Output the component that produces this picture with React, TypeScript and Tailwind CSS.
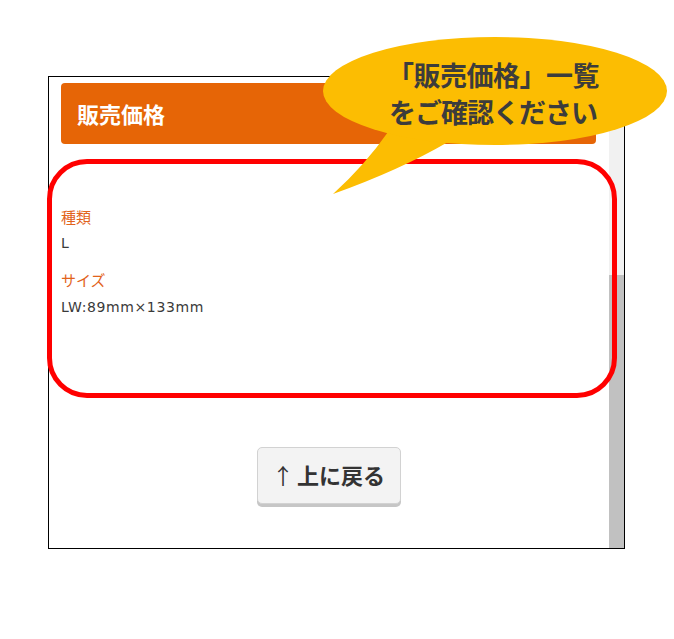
import React from 'react';

const jp = { fontFamily: '"Noto Sans CJK JP", "Noto Sans", sans-serif' };
const mixed = { fontFamily: '"DejaVu Sans", "Noto Sans CJK JP", sans-serif' };

const SpecRow: React.FC<{ label: string; value: string; labelClass: string; valueClass: string }> = ({ label, value, labelClass, valueClass }) => (
    <>
        <p className={`text-[15px] leading-[24px] text-[#e2631b] ${labelClass}`}>{label}</p>
        <p className={`text-[14px] leading-[24px] tracking-[0.6px] text-[#3a3a3a] ${valueClass}`} style={mixed}>{value}</p>
    </>
);

const App: React.FC = () => {
    return (
        <div className="relative w-[674px] h-[639px] bg-white overflow-hidden" style={jp}>
            {/* Browser frame */}
            <div className="absolute left-[48px] top-[76px] w-[577px] h-[473px] border border-black bg-white flex">
                <div className="flex-1 pl-[12px] pr-[13px] flex flex-col">
                    <div className="mt-[6px] h-[61px] rounded-[4px] bg-[#e66506] flex items-center pl-[16px]">
                        <h2 className="text-[22px] font-bold text-white">販売価格</h2>
                    </div>

                    <SpecRow label="種類" value="L" labelClass="mt-[61px]" valueClass="mt-[2px]" />
                    <SpecRow label="サイズ" value="LW:89mm×133mm" labelClass="mt-[13px]" valueClass="mt-[3px]" />

                    <div className="mt-[128px] flex justify-center">
                        <button className="w-[144px] h-[57px] rounded-[5px] bg-[#f3f3f3] border border-[#d2d2d2] shadow-[0_3px_0_#c6c6c6] text-[22px] font-bold text-[#333333] pb-[2px]">
                            <span className="font-normal mr-[3px]">↑</span>上に戻る
                        </button>
                    </div>
                </div>

                {/* Scrollbar */}
                <div className="w-[15px] flex flex-col">
                    <div className="h-[198px] bg-[#f1f1f1]" />
                    <div className="flex-1 bg-[#c1c1c1]" />
                </div>
            </div>

            {/* Red highlight */}
            <div className="absolute left-[47px] top-[159px] w-[570px] h-[239px] border-[5px] border-[#ff0000] rounded-[40px]" />

            {/* Speech bubble */}
            <svg className="absolute left-0 top-0" width="674" height="639" viewBox="0 0 674 639">
                <path d="M388 132 L448 142 Q400 170 333 194 Q365 165 388 132 Z" fill="#fcbd02" />
                <ellipse cx="495" cy="91" rx="172" ry="54" fill="#fcbd02" />
            </svg>
            <div className="absolute left-[323px] top-[56px] w-[340px] text-center text-[27px] leading-[37px] font-bold text-[#3c3c3c]">
                <p className="tracking-[-0.5px]">「販売価格」一覧</p>
                <p className="tracking-[-1px]">をご確認ください</p>
            </div>
        </div>
    );
};

export default App;
